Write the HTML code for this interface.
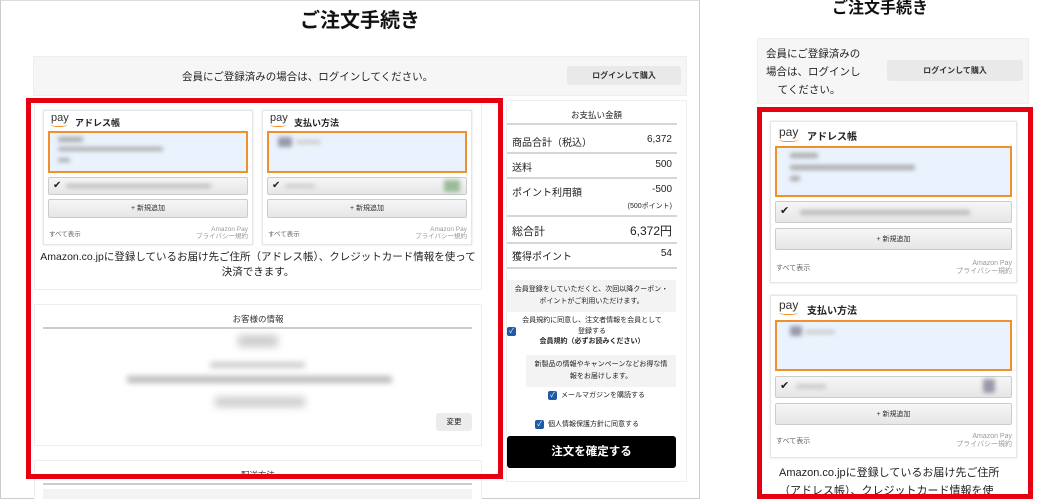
<!DOCTYPE html>
<html style="overflow:hidden;width:1039px;height:500px"><head><meta charset="utf-8"><style>
*{margin:0;padding:0;box-sizing:border-box}
body{width:1039px;height:500px;background:#fff;position:relative;overflow:hidden;font-family:"Liberation Sans","Noto Sans CJK JP",sans-serif;color:#222}
.a{position:absolute}
.t{white-space:nowrap}
.blur{position:absolute;background:#aaa;filter:blur(2px);border-radius:2px}
.card{position:absolute;background:#fff;border:1px solid #e6e6e6;box-shadow:0 0 2px #ddd}
.ob{position:absolute;border:2px solid #f0902a;background:#eaf2fd}
.gb{position:absolute;border:1px solid #ccc;background:linear-gradient(#f6f6f6,#e6e6e6);border-radius:2px;font-size:7px;text-align:center;color:#333}
.pay{position:absolute;font-size:11px;color:#333;line-height:1}
.pay i{position:absolute;left:0;top:10px;width:16px;height:4px;border-bottom:1.5px solid #f08a1c;border-radius:0 0 50% 50%}
.red{position:absolute;border:5px solid #e60012}
.rl{position:absolute;height:2px;background:#d6d6d6}
.row{position:absolute;font-size:10px;display:flex;justify-content:space-between}
.chk{position:absolute;width:9px;height:9px;background:#1f5aa6;border-radius:2px;color:#fff;font-size:7px;line-height:9px;text-align:center}
</style></head><body>
<div class="a" style="left:0;top:0;width:700px;height:499px;border:1px solid #ccc;border-top-color:#ddd"></div>
<div class="a t" style="left:0;width:720px;top:4px;text-align:center;font-size:20px;font-weight:bold;color:#111">ご注文手続き</div>
<div class="a" style="left:33px;top:56px;width:654px;height:40px;background:#f6f6f6;border:1px solid #eee"></div>
<div class="a t" style="left:182px;top:69px;font-size:10.5px;color:#222">会員にご登録済みの場合は、ログインしてください。</div>
<div class="a t" style="left:567px;top:66px;width:114px;height:19px;background:#e9e9e9;border-radius:3px;font-size:8px;text-align:center;line-height:19px;font-weight:bold;color:#333">ログインして購入</div>

<div class="card" style="left:34px;top:100px;width:448px;height:190px;box-shadow:none;border-color:#eee"></div>
<div class="card" style="left:43px;top:110px;width:210px;height:135px"></div>
<div class="pay t" style="left:51px;top:113px">pay<i></i></div>
<div class="a t" style="left:75px;top:116px;font-size:9px;font-weight:bold">アドレス帳</div>
<div class="ob" style="left:48px;top:131px;width:200px;height:42px"></div>
<div class="blur" style="left:58px;top:137px;width:25px;height:5px"></div>
<div class="blur" style="left:58px;top:147px;width:105px;height:4px"></div>
<div class="blur" style="left:58px;top:158px;width:12px;height:4px"></div>
<div class="gb" style="left:48px;top:177px;width:200px;height:18px"></div>
<div class="a" style="left:53px;top:180px;font-size:10px">✔</div>
<div class="blur" style="left:66px;top:184px;width:145px;height:4px;background:#bbb"></div>
<div class="gb" style="left:48px;top:199px;width:200px;height:19px;line-height:18px">+ 新規追加</div>
<div class="a t" style="left:49px;top:228px;font-size:6.5px;color:#666">すべて表示</div>
<div class="a t" style="left:180px;top:226px;width:68px;font-size:6.5px;color:#999;text-align:right;line-height:7px">Amazon Pay<br>プライバシー規約</div>
<div class="card" style="left:262px;top:110px;width:210px;height:135px"></div>
<div class="pay t" style="left:270px;top:113px">pay<i></i></div>
<div class="a t" style="left:294px;top:116px;font-size:9px;font-weight:bold">支払い方法</div>
<div class="ob" style="left:267px;top:131px;width:200px;height:42px"></div>
<div class="blur" style="left:278px;top:137px;width:14px;height:10px;background:#99a"></div>
<div class="blur" style="left:296px;top:140px;width:25px;height:4px;background:#ccc"></div>
<div class="gb" style="left:267px;top:177px;width:200px;height:18px"></div>
<div class="a" style="left:272px;top:180px;font-size:10px">✔</div>
<div class="blur" style="left:285px;top:184px;width:30px;height:4px;background:#ccc"></div>
<div class="blur" style="left:444px;top:180px;width:16px;height:12px;background:#9b9"></div>
<div class="gb" style="left:267px;top:199px;width:200px;height:19px;line-height:18px">+ 新規追加</div>
<div class="a t" style="left:268px;top:228px;font-size:6.5px;color:#666">すべて表示</div>
<div class="a t" style="left:399px;top:226px;width:68px;font-size:6.5px;color:#999;text-align:right;line-height:7px">Amazon Pay<br>プライバシー規約</div>
<div class="a" style="left:36px;top:250px;width:444px;font-size:10.5px;text-align:center;line-height:15px">Amazon.co.jpに登録しているお届け先ご住所（アドレス帳）、クレジットカード情報を使って決済できます。</div>

<div class="card" style="left:34px;top:304px;width:448px;height:142px;box-shadow:none;border-color:#eee"></div>
<div class="a t" style="left:0;width:516px;top:313px;text-align:center;font-size:8.5px;color:#333">お客様の情報</div>
<div class="a" style="left:43px;top:327px;width:429px;height:2px;background:#ccc"></div>
<div class="blur" style="left:238px;top:335px;width:40px;height:12px;background:#ccc;filter:blur(4px)"></div>
<div class="blur" style="left:210px;top:362px;width:95px;height:6px;background:#ccc;filter:blur(3px)"></div>
<div class="blur" style="left:127px;top:376px;width:265px;height:7px;background:#bbb;filter:blur(3px)"></div>
<div class="blur" style="left:215px;top:397px;width:90px;height:10px;background:#ccc;filter:blur(4px)"></div>
<div class="a t" style="left:436px;top:413px;width:36px;height:18px;background:#ececec;border-radius:3px;font-size:7.5px;text-align:center;line-height:18px">変更</div>
<div class="card" style="left:34px;top:460px;width:448px;height:39px;box-shadow:none;border-color:#eee;border-bottom:none"></div>
<div class="a t" style="left:0;width:516px;top:469px;text-align:center;font-size:8.5px;color:#333">配送方法</div>
<div class="a" style="left:43px;top:483px;width:429px;height:2px;background:#ccc"></div>
<div class="a" style="left:43px;top:489px;width:429px;height:10px;background:#f3f3f3"></div>

<div class="red" style="left:26px;top:98px;width:477px;height:381px"></div>

<div class="card" style="left:506px;top:100px;width:181px;height:382px;box-shadow:none;border-color:#eee"></div>
<div class="a t" style="left:506px;width:181px;top:109px;text-align:center;font-size:8.5px">お支払い金額</div>
<div class="rl" style="top:123px;left:507px;width:170px"></div>
<div class="row" style="top:134px;left:512px;width:160px"><span>商品合計（税込）</span><span>6,372</span></div>
<div class="rl" style="top:152px;left:507px;width:170px"></div>
<div class="row" style="top:159px;left:512px;width:160px"><span>送料</span><span>500</span></div>
<div class="rl" style="top:177px;left:507px;width:170px"></div>
<div class="row" style="top:184px;left:512px;width:160px"><span>ポイント利用額</span><span>-500</span></div>
<div class="a t" style="left:620px;top:201px;width:52px;text-align:right;font-size:7px">(500ポイント)</div>
<div class="rl" style="top:215px;left:507px;width:170px"></div>
<div class="row" style="top:222px;left:512px;width:160px;font-size:11px;align-items:baseline"><span>総合計</span><span style="font-size:12px">6,372円</span></div>
<div class="rl" style="top:242px;left:507px;width:170px"></div>
<div class="row" style="top:248px;left:512px;width:160px"><span>獲得ポイント</span><span>54</span></div>
<div class="rl" style="top:267px;left:507px;width:170px"></div>
<div class="a" style="left:507px;top:280px;width:169px;height:32px;background:#f3f3f3;font-size:7px;text-align:center;line-height:12px;padding-top:4px">会員登録をしていただくと、次回以降クーポン・<br>ポイントがご利用いただけます。</div>
<div class="chk" style="left:507px;top:327px">✓</div>
<div class="a" style="left:517px;top:316px;width:150px;font-size:7px;text-align:center;line-height:10.5px">会員規約に同意し、注文者情報を会員として<br>登録する<br><b>会員規約（必ずお読みください）</b></div>
<div class="a" style="left:526px;top:355px;width:150px;height:32px;background:#f3f3f3;font-size:7px;text-align:center;line-height:12px;padding-top:4px">新製品の情報やキャンペーンなどお得な情<br>報をお届けします。</div>
<div class="chk" style="left:548px;top:391px">✓</div>
<div class="a t" style="left:561px;top:390px;font-size:7px">メールマガジンを購読する</div>
<div class="chk" style="left:535px;top:420px">✓</div>
<div class="a t" style="left:548px;top:419px;font-size:7px">個人情報保護方針に同意する</div>
<div class="a t" style="left:507px;top:436px;width:169px;height:32px;background:#000;border-radius:3px;color:#fff;font-size:11.5px;font-weight:bold;text-align:center;line-height:32px">注文を確定する</div>

<div class="a t" style="left:832px;top:-6px;font-size:16px;font-weight:bold;color:#111">ご注文手続き</div>
<div class="a" style="left:757px;top:38px;width:272px;height:66px;background:#f6f6f6;border:1px solid #eee"></div>
<div class="a" style="left:766px;top:45px;width:110px;font-size:10.5px;line-height:18px">会員にご登録済みの<br>場合は、ログインし<br>&nbsp;&nbsp;&nbsp;&nbsp;てください。</div>
<div class="a t" style="left:887px;top:60px;width:136px;height:21px;background:#e9e9e9;border-radius:3px;font-size:8px;text-align:center;line-height:21px;font-weight:bold;color:#333">ログインして購入</div>

<div class="card" style="left:770px;top:121px;width:247px;height:162px"></div>
<div class="pay t" style="left:779px;top:126px;font-size:12px">pay<i style="top:12px;width:19px"></i></div>
<div class="a t" style="left:807px;top:128px;font-size:10px;font-weight:bold">アドレス帳</div>
<div class="ob" style="left:775px;top:146px;width:237px;height:51px"></div>
<div class="blur" style="left:790px;top:153px;width:28px;height:5px"></div>
<div class="blur" style="left:790px;top:165px;width:125px;height:5px"></div>
<div class="blur" style="left:790px;top:176px;width:10px;height:5px"></div>
<div class="gb" style="left:775px;top:201px;width:237px;height:22px"></div>
<div class="a" style="left:780px;top:204px;font-size:11px">✔</div>
<div class="blur" style="left:800px;top:210px;width:170px;height:5px;background:#bbb"></div>
<div class="gb" style="left:775px;top:228px;width:237px;height:22px;line-height:21px">+ 新規追加</div>
<div class="a t" style="left:776px;top:263px;font-size:7px;color:#666">すべて表示</div>
<div class="a t" style="left:930px;top:260px;width:82px;font-size:7px;color:#999;text-align:right;line-height:8px">Amazon Pay<br>プライバシー規約</div>

<div class="card" style="left:770px;top:295px;width:247px;height:163px"></div>
<div class="pay t" style="left:779px;top:299px;font-size:12px">pay<i style="top:12px;width:19px"></i></div>
<div class="a t" style="left:807px;top:302px;font-size:10px;font-weight:bold">支払い方法</div>
<div class="ob" style="left:775px;top:320px;width:237px;height:51px"></div>
<div class="blur" style="left:790px;top:326px;width:12px;height:10px;background:#99a"></div>
<div class="blur" style="left:805px;top:330px;width:30px;height:4px;background:#ccc"></div>
<div class="gb" style="left:775px;top:376px;width:237px;height:22px"></div>
<div class="a" style="left:780px;top:379px;font-size:11px">✔</div>
<div class="blur" style="left:796px;top:384px;width:30px;height:5px;background:#ccc"></div>
<div class="blur" style="left:983px;top:379px;width:12px;height:14px;background:#99a"></div>
<div class="gb" style="left:775px;top:403px;width:237px;height:22px;line-height:21px">+ 新規追加</div>
<div class="a t" style="left:776px;top:436px;font-size:7px;color:#666">すべて表示</div>
<div class="a t" style="left:930px;top:433px;width:82px;font-size:7px;color:#999;text-align:right;line-height:8px">Amazon Pay<br>プライバシー規約</div>
<div class="a t" style="left:779px;top:464px;font-size:11px;line-height:18px">Amazon.co.jpに登録しているお届け先ご住所<br>（アドレス帳）、クレジットカード情報を使</div>
<div class="red" style="left:757px;top:107px;width:276px;height:392px"></div>
</body></html>
